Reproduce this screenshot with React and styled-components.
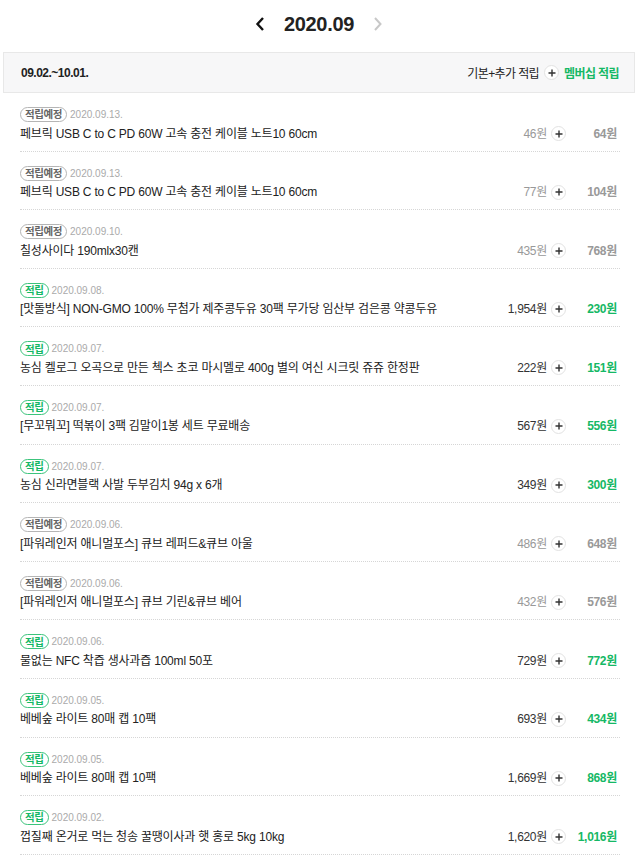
import React from 'react';
import styled, { createGlobalStyle } from 'styled-components';

const Global = createGlobalStyle`
  body { margin: 0; background: #fff; font-family: "Liberation Sans", "Noto Sans CJK KR", sans-serif; color: #222; }
`;

const GREEN = '#15b865';

const Page = styled.div`
  width: 638px;
`;

const MonthNav = styled.div`
  height: 48px;
  display: flex;
  align-items: center;
  justify-content: center;
  gap: 16px;
`;

const Month = styled.div`
  font-family: "Liberation Sans", Arial, sans-serif;
  font-weight: bold;
  font-size: 20px;
  color: #222;
  letter-spacing: -0.3px;
`;

const NavBtn = styled.button`
  border: 0;
  background: none;
  padding: 0;
  width: 16px;
  height: 20px;
  display: flex;
  align-items: center;
  justify-content: center;
  color: ${p => (p.$disabled ? '#c8c8c8' : '#111')};
`;

const Summary = styled.div`
  margin: 4px 3px 0;
  height: 39px;
  border: 1px solid #e8e8e8;
  background: #f7f7f8;
  display: flex;
  align-items: center;
  justify-content: space-between;
  padding: 0 15px 0 17px;
  font-size: 12px;
`;

const Period = styled.span`
  font-weight: bold;
  letter-spacing: -0.5px;
  color: #222;
`;

const Legend = styled.div`
  display: flex;
  align-items: center;
  gap: 5px;
  font-size: 12px;
  letter-spacing: -0.6px;
`;

const LegendGreen = styled.span`
  color: ${GREEN};
  font-weight: bold;
`;

const PlusCircle = styled.span`
  width: 15px;
  height: 15px;
  border-radius: 50%;
  border: 1px solid #e2e2e2;
  background: #fff;
  display: inline-flex;
  align-items: center;
  justify-content: center;
  box-sizing: border-box;
  align-self: center;
`;

const List = styled.ul`
  list-style: none;
  margin: 0;
  padding: 0 18px 0 20px;
`;

const Row = styled.li`
  display: flex;
  align-items: last baseline;
  justify-content: space-between;
  padding: 13.5px 0 8.1px;
  border-bottom: 1px dotted #d6d6d6;
`;

const Left = styled.div`
  display: flex;
  flex-direction: column;
  gap: 2px;
`;

const Meta = styled.div`
  display: flex;
  align-items: center;
  gap: 3px;
  height: 16px;
`;

const Badge = styled.span`
  display: inline-flex;
  align-items: center;
  height: 15px;
  padding: 0 4px;
  border-radius: 8px;
  border: 1px solid ${p => (p.$done ? '#3cc47c' : '#b5b5b5')};
  color: ${p => (p.$done ? GREEN : '#666')};
  font-family: "Noto Sans CJK KR", sans-serif;
  font-size: 10.5px;
  font-weight: bold;
  line-height: 1;
  letter-spacing: -0.4px;
  box-sizing: border-box;
`;

const DateText = styled.span`
  font-size: 10px;
  color: #aaa;
`;

const Title = styled.div`
  font-size: 12px;
  line-height: 18px;
  color: #222;
  letter-spacing: -0.2px;
`;

const Amounts = styled.div`
  display: flex;
  align-items: baseline;
  line-height: 18px;
  font-size: 12px;
  letter-spacing: -0.3px;
  margin-right: 3px;
`;

const Base = styled.span`
  min-width: 50px;
  text-align: right;
  color: ${p => (p.$done ? '#333' : '#999')};
`;

const Extra = styled.span`
  min-width: 48px;
  text-align: right;
  font-weight: bold;
  color: ${p => (p.$done ? GREEN : '#999')};
`;

const Gap = styled.span`
  display: inline-flex;
  align-self: center;
  margin: 0 3px 0 4px;
`;

const Plus = () => (
  <PlusCircle>
    <svg width="8" height="8" viewBox="0 0 8 8">
      <path d="M4 0.5V7.5M0.5 4H7.5" stroke="#333" strokeWidth="1.4" />
    </svg>
  </PlusCircle>
);

const items = [
  [false, '2020.09.13.', '페브릭 USB C to C PD 60W 고속 충전 케이블 노트10 60cm', '46원', '64원'],
  [false, '2020.09.13.', '페브릭 USB C to C PD 60W 고속 충전 케이블 노트10 60cm', '77원', '104원'],
  [false, '2020.09.10.', '칠성사이다 190mlx30캔', '435원', '768원'],
  [true, '2020.09.08.', '[맛돌방식] NON-GMO 100% 무첨가 제주콩두유 30팩 무가당 임산부 검은콩 약콩두유', '1,954원', '230원'],
  [true, '2020.09.07.', '농심 켈로그 오곡으로 만든 첵스 초코 마시멜로 400g 별의 여신 시크릿 쥬쥬 한정판', '222원', '151원'],
  [true, '2020.09.07.', '[무꼬뭐꼬] 떡볶이 3팩 김말이1봉 세트 무료배송', '567원', '556원'],
  [true, '2020.09.07.', '농심 신라면블랙 사발 두부김치 94g x 6개', '349원', '300원'],
  [false, '2020.09.06.', '[파워레인저 애니멀포스] 큐브 레퍼드&큐브 아울', '486원', '648원'],
  [false, '2020.09.06.', '[파워레인저 애니멀포스] 큐브 기린&큐브 베어', '432원', '576원'],
  [true, '2020.09.06.', '물없는 NFC 착즙 생사과즙 100ml 50포', '729원', '772원'],
  [true, '2020.09.05.', '베베숲 라이트 80매 캡 10팩', '693원', '434원'],
  [true, '2020.09.05.', '베베숲 라이트 80매 캡 10팩', '1,669원', '868원'],
  [true, '2020.09.02.', '껍질째 온거로 먹는 청송 꿀땡이사과 햇 홍로 5kg 10kg', '1,620원', '1,016원'],
];

export default function App() {
  return (
    <Page>
      <Global />
      <MonthNav>
        <NavBtn aria-label="이전">
          <svg width="10" height="16" viewBox="0 0 10 16">
            <path d="M8 2L2.5 8L8 14" fill="none" stroke="currentColor" strokeWidth="2.4" />
          </svg>
        </NavBtn>
        <Month>2020.09</Month>
        <NavBtn $disabled aria-label="다음">
          <svg width="10" height="16" viewBox="0 0 10 16">
            <path d="M2 2L7.5 8L2 14" fill="none" stroke="currentColor" strokeWidth="2" />
          </svg>
        </NavBtn>
      </MonthNav>
      <Summary>
        <Period>09.02.~10.01.</Period>
        <Legend>
          <span>기본+추가 적립</span>
          <Plus />
          <LegendGreen>멤버십 적립</LegendGreen>
        </Legend>
      </Summary>
      <List>
        {items.map(([done, date, title, base, extra], i) => (
          <Row key={i}>
            <Left>
              <Meta>
                <Badge $done={done}>{done ? '적립' : '적립예정'}</Badge>
                <DateText>{date}</DateText>
              </Meta>
              <Title>{title}</Title>
            </Left>
            <Amounts>
              <Base $done={done}>{base}</Base>
              <Gap><Plus /></Gap>
              <Extra $done={done}>{extra}</Extra>
            </Amounts>
          </Row>
        ))}
      </List>
    </Page>
  );
}
